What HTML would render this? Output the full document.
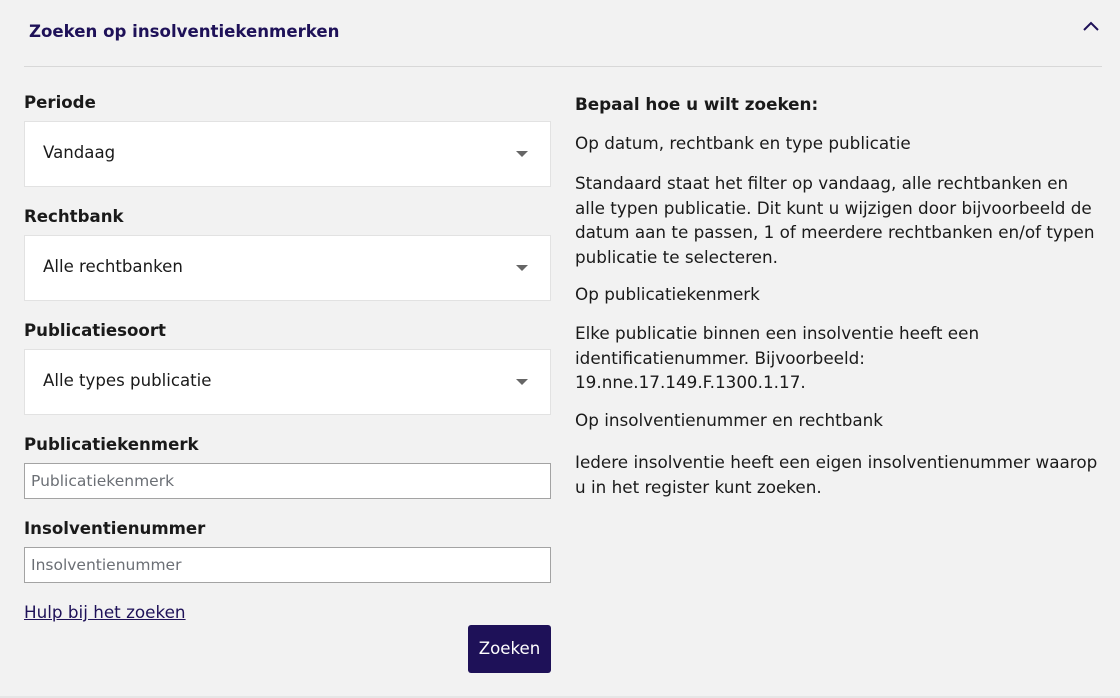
<!DOCTYPE html>
<html><head><style>
body{margin:0;width:1120px;height:698px;background:#f2f2f2;font-family:"DejaVu Sans","Liberation Sans",sans-serif;color:#1a1a1a;overflow:hidden;position:relative}
.title{position:absolute;left:29px;top:22px;font-size:16.6px;font-weight:bold;color:#1e1158}
.chev{position:absolute;left:1082px;top:20px}
.hr{position:absolute;left:24px;right:18px;top:66px;height:1px;background:#d8d8d8}
.lbl{position:absolute;left:24px;font-size:16.6px;font-weight:bold}
.sel{position:absolute;left:24px;width:525px;height:64px;background:#fff;border:1px solid #e2e2e2;font-size:16.6px}
.sel span{position:absolute;left:18px;top:21px}
.sel i{position:absolute;right:22px;top:29px;width:0;height:0;border-left:6px solid transparent;border-right:6px solid transparent;border-top:6px solid #666}
.inp{position:absolute;left:24px;width:525px;height:34px;background:#fff;border:1px solid #a3a3a3;font-size:15.5px;color:#6b6f75}
.inp span{position:absolute;left:6px;top:8px}
.link{position:absolute;left:24px;top:602px;font-size:16.8px;color:#1e1158;text-decoration:underline}
.btn{position:absolute;left:468px;top:625px;width:83px;height:48px;background:#1e1158;border-radius:3px;color:#fff;font-size:16.6px;text-align:center;line-height:48px}
.r{position:absolute;left:575px;width:535px;font-size:16.8px;line-height:24.5px}
.bot{position:absolute;left:0;right:0;top:696px;height:2px;background:#e6e6e6}
</style></head><body>
<div class="title">Zoeken op insolventiekenmerken</div>
<svg class="chev" width="18" height="12" viewBox="0 0 18 12"><path d="M2 10 L9 3 L16 10" fill="none" stroke="#1e1158" stroke-width="2"/></svg>
<div class="hr"></div>
<div class="lbl" style="top:93px">Periode</div>
<div class="sel" style="top:121px"><span>Vandaag</span><i></i></div>
<div class="lbl" style="top:207px">Rechtbank</div>
<div class="sel" style="top:235px"><span>Alle rechtbanken</span><i></i></div>
<div class="lbl" style="top:321px">Publicatiesoort</div>
<div class="sel" style="top:349px"><span>Alle types publicatie</span><i></i></div>
<div class="lbl" style="top:435px">Publicatiekenmerk</div>
<div class="inp" style="top:463px"><span>Publicatiekenmerk</span></div>
<div class="lbl" style="top:519px">Insolventienummer</div>
<div class="inp" style="top:547px"><span>Insolventienummer</span></div>
<div class="link">Hulp bij het zoeken</div>
<div class="btn">Zoeken</div>
<div class="r" style="top:92px;font-weight:bold">Bepaal hoe u wilt zoeken:</div>
<div class="r" style="top:131px">Op datum, rechtbank en type publicatie</div>
<div class="r" style="top:171px">Standaard staat het filter op vandaag, alle rechtbanken en<br>alle typen publicatie. Dit kunt u wijzigen door bijvoorbeeld de<br>datum aan te passen, 1 of meerdere rechtbanken en/of typen<br>publicatie te selecteren.</div>
<div class="r" style="top:282px">Op publicatiekenmerk</div>
<div class="r" style="top:321px">Elke publicatie binnen een insolventie heeft een<br>identificatienummer. Bijvoorbeeld:<br>19.nne.17.149.F.1300.1.17.</div>
<div class="r" style="top:408px">Op insolventienummer en rechtbank</div>
<div class="r" style="top:450px">Iedere insolventie heeft een eigen insolventienummer waarop<br>u in het register kunt zoeken.</div>
<div class="bot"></div>
</body></html>
